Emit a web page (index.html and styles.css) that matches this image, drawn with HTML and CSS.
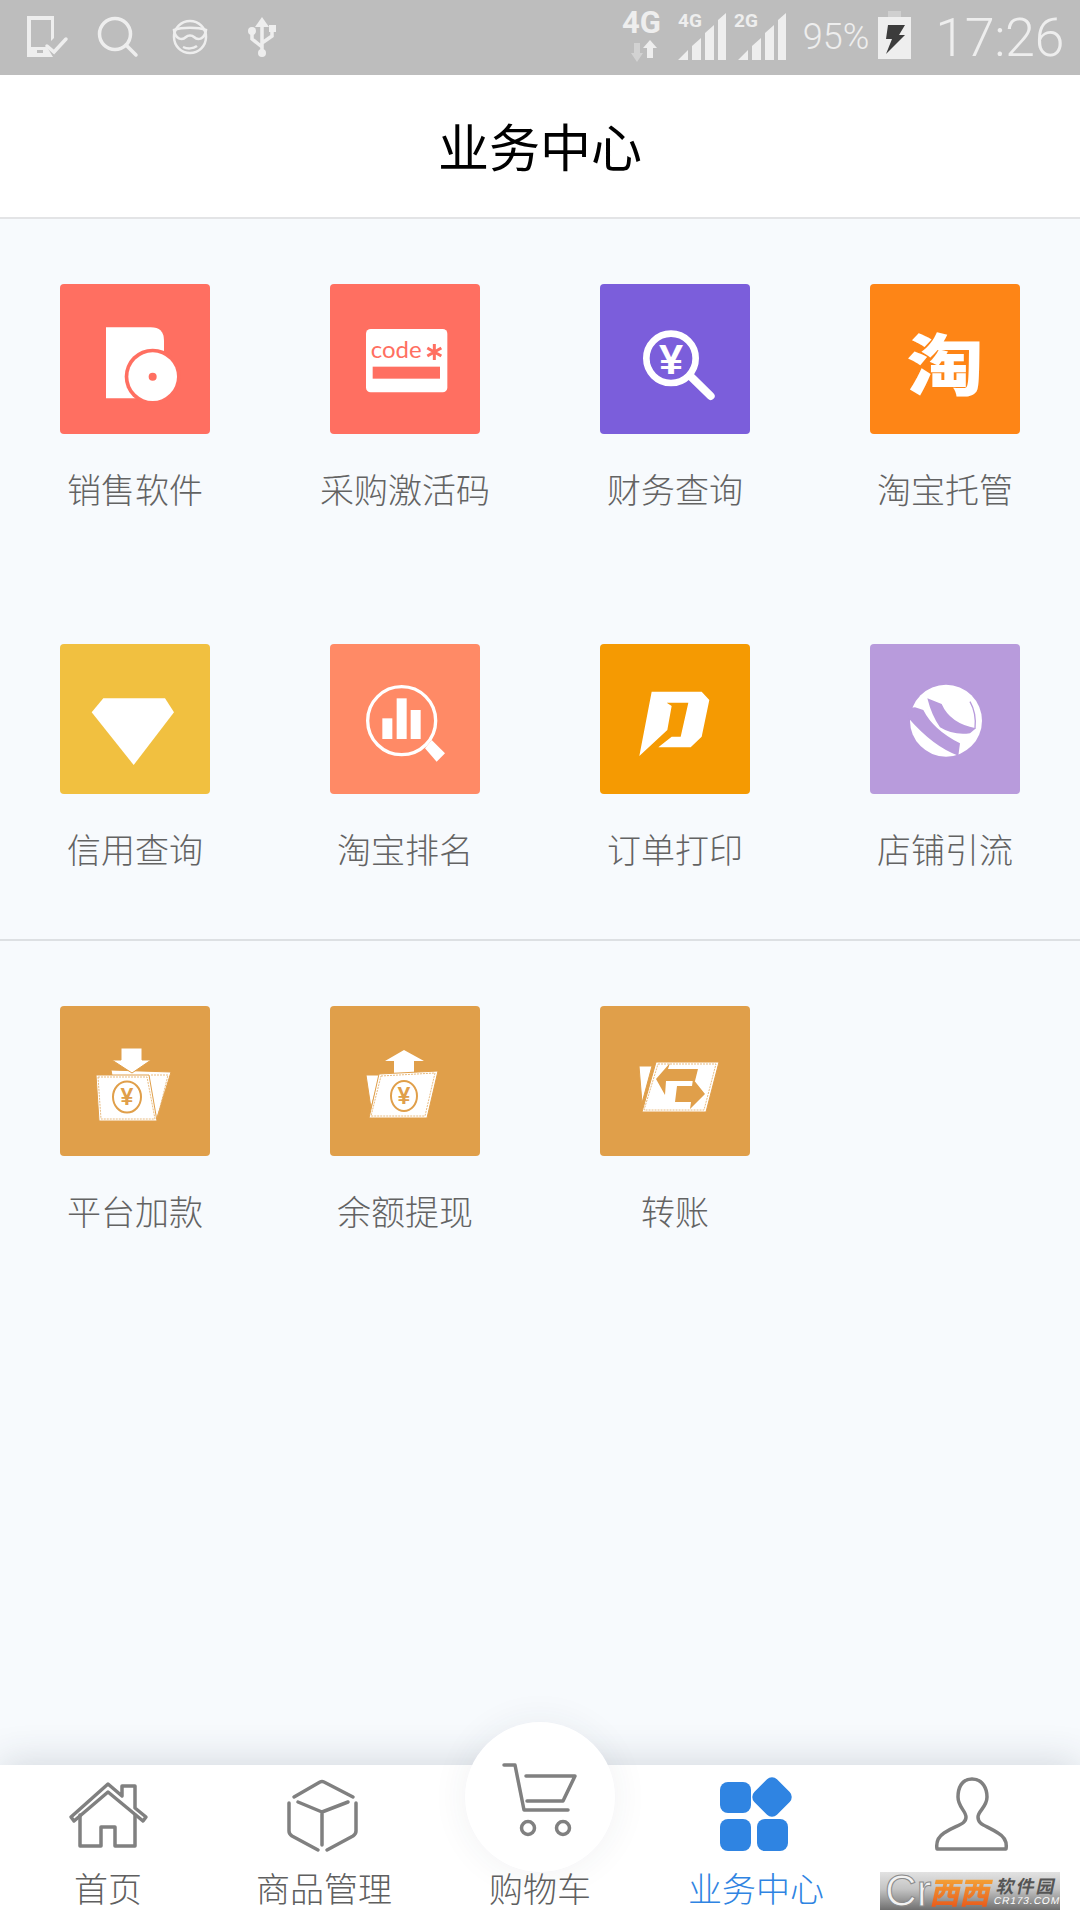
FILE: index.html
```html
<!doctype html>
<html lang="zh-CN">
    <head>
        <meta charset="UTF-8" />
        <meta name="viewport" content="width=device-width, initial-scale=1.0" />
        <title>业务中心</title>
        <link rel="stylesheet" href="styles.css">
    </head>
    <body>
        <div class="statusbar">
            <div class="status-left">
                <svg class="slot" viewBox="11 0 72 75">
                    <path class="st-fill" fill-rule="evenodd" d="M27 16H54V38L51 41V20H31V47H47L53 57H27Z" />
                    <rect x="37" y="50" width="6" height="3" fill="#bdbdbd" />
                    <path class="st-line" d="M47 46L54 52L66 39" />
                </svg>
                <svg class="slot" viewBox="83 0 72 75">
                    <circle class="st-line" cx="115" cy="34" r="15.5" />
                    <path class="st-line" d="M126 45L136 55" />
                </svg>
                <svg class="slot" viewBox="155 0 72 75">
                    <circle class="st-thin" cx="190" cy="37" r="16" />
                    <path class="st-thin" d="M174 30C182 27 198 27 206 30C205 39 198 41 194 37C192 35 188 35 186 37C182 41 175 39 174 30Z" />
                    <path class="st-thin" d="M183 47C187 49 193 49 197 46" />
                </svg>
                <svg class="slot" viewBox="227 0 72 75">
                    <path class="st-fill" d="M262 17L269 27H255Z" />
                    <path class="st-line" d="M262 25V52M262 47L252 39V32M262 43L272 36V30" />
                    <circle class="st-fill" cx="262" cy="53" r="4" />
                    <circle class="st-fill" cx="252" cy="31" r="4" />
                    <rect class="st-fill" x="269" y="25" width="7" height="7" />
                </svg>
            </div>
            <div class="status-right">
                <svg class="net" viewBox="618 0 50 75">
                    <text class="st-net" x="622" y="33">4G</text>
                    <path fill="#d2d2d2" d="M634 43H640V53H643L637 62L631 53H634Z" />
                    <path class="st-fill" d="M650 40L657 48H653V58H647V48H643Z" />
                </svg>
                <svg class="signal" viewBox="674 0 56 75">
                    <text class="st-small" x="678" y="27">4G</text>
                    <path class="st-fill" d="M678 60L688 50V60ZM692 46L701 38V60H692ZM705 33L714 25V60H705ZM718 20L726 13V60H718Z" />
                </svg>
                <svg class="signal" viewBox="730 0 56 75">
                    <text class="st-small" x="734" y="27">2G</text>
                    <path class="st-fill" d="M738 60L748 50V60ZM752 46L761 38V60H752ZM765 33L774 25V60H765ZM778 20L786 13V60H778Z" />
                </svg>
                <span class="percent">95%</span>
                <svg class="battery" viewBox="878 0 36 75">
                    <rect x="889" y="11" width="13" height="7" fill="#cfcfcf" />
                    <rect class="st-fill" x="879" y="17" width="33" height="42" />
                    <path fill="#3c3c3c" d="M889 25H906L900 35H906L887 54L893 39H887Z" />
                </svg>
                <span class="clock">17:26</span>
            </div>
        </div>

        <div class="header">业务中心</div>

        <div class="content">
            <div class="grid grid-main">
                <div class="item">
                    <svg class="tile t-coral" viewBox="0 0 450 450">
                        <path fill="#fff" d="M138 130H272Q312 130 312 170V343H138Z" />
                        <circle cx="278" cy="278" r="84" fill="#ff6f61" />
                        <circle cx="278" cy="278" r="73" fill="#fff" />
                        <circle cx="278" cy="278" r="12" fill="#ff6f61" />
                    </svg>
                    <div class="label">销售软件</div>
                </div>
                <div class="item">
                    <svg class="tile t-coral" viewBox="0 0 450 450">
                        <rect x="108" y="135" width="244" height="190" rx="14" fill="#fff" />
                        <text class="code-text" x="122" y="223">code</text>
                        <path class="code-star" d="M313 180V228M292 192L334 216M334 192L292 216" />
                        <rect x="128" y="248" width="202" height="36" fill="#ff6f61" />
                    </svg>
                    <div class="label">采购激活码</div>
                </div>
                <div class="item">
                    <svg class="tile t-violet" viewBox="0 0 450 450">
                        <circle cx="213" cy="223" r="74" fill="none" stroke="#fff" stroke-width="20" />
                        <path d="M275 280L332 336" stroke="#fff" stroke-width="24" stroke-linecap="round" />
                        <text class="yuan-text" x="213" y="271">¥</text>
                    </svg>
                    <div class="label">财务查询</div>
                </div>
                <div class="item">
                    <svg class="tile t-orange" viewBox="0 0 450 450">
                        <text class="tao-text" transform="translate(225 318) scale(1.15 1)">淘</text>
                    </svg>
                    <div class="label">淘宝托管</div>
                </div>
                <div class="item">
                    <svg class="tile t-yellow" viewBox="0 0 450 450">
                        <path fill="#fff" d="M130 163H315L342 205L221 363L95 205Z" />
                    </svg>
                    <div class="label">信用查询</div>
                </div>
                <div class="item">
                    <svg class="tile t-salmon" viewBox="0 0 450 450">
                        <circle cx="215" cy="230" r="102" fill="none" stroke="#fff" stroke-width="10" />
                        <path fill="#fff" d="M285 313L305 288L345 328L320 353Z" />
                        <rect x="157" y="223" width="30" height="62" fill="#fff" />
                        <rect x="200" y="163" width="30" height="122" fill="#fff" />
                        <rect x="242" y="198" width="30" height="87" fill="#fff" />
                    </svg>
                    <div class="label">淘宝排名</div>
                </div>
                <div class="item">
                    <svg class="tile t-amber" viewBox="0 0 450 450">
                        <path fill="#fff" d="M155 143H305L328 168L305 278L272 310H175L215 278H242L265 176H200L215 186L202 258L118 336Z" />
                    </svg>
                    <div class="label">订单打印</div>
                </div>
                <div class="item">
                    <svg class="tile t-lilac" viewBox="0 0 450 450">
                        <circle cx="228" cy="230" r="108" fill="#fff" />
                        <path fill="#b89bdc" d="M112 193L135 190L160 198Q190 258 270 298L265 335Q190 308 115 222Z" />
                        <path fill="#b89bdc" d="M172 163L215 180Q240 238 318 253L300 268Q250 275 210 250Q185 215 172 163Z" />
                        <path d="M300 173Q320 208 315 253" fill="none" stroke="#b89bdc" stroke-width="4" />
                    </svg>
                    <div class="label">店铺引流</div>
                </div>
            </div>

            <div class="grid">
                <div class="item">
                    <svg class="tile t-tan" viewBox="0 0 150 150">
                        <path class="card" d="M51 64L111 66L96 115H60Z" />
                        <path class="card" d="M36 69H89L97 115H39Z" />
                        <path class="stitch" d="M38 71H87L95 113H41Z" />
                        <path class="stitch" d="M91 69L108 69L98 110" />
                        <path fill="#fff" stroke="#e09f4a" stroke-width="1" d="M61 42H82V54H91L72 67L52 54H61Z" />
                        <ellipse class="coin" cx="67" cy="91" rx="14" ry="15.5" />
                        <text class="coin-text" x="67" y="99">¥</text>
                    </svg>
                    <div class="label">平台加款</div>
                </div>
                <div class="item">
                    <svg class="tile t-tan" viewBox="0 0 150 150">
                        <path fill="#fff" d="M74 44L94 55H84V68H64V55H55Z" />
                        <path class="card" d="M36 69H50L41 102Z" />
                        <path class="card" d="M49 68L108 65L97 112H39Z" />
                        <path class="stitch" d="M51 70L105 67L95 110H41Z" />
                        <ellipse class="coin" cx="74" cy="90" rx="13" ry="15" />
                        <text class="coin-text" x="74" y="98">¥</text>
                    </svg>
                    <div class="label">余额提现</div>
                </div>
                <div class="item">
                    <svg class="tile t-tan" viewBox="0 0 150 150">
                        <path class="card" d="M39 60H52L42 97Z" />
                        <path class="card" d="M56 56H119L106 106H42Z" />
                        <path class="stitch" d="M58 58H116L104 104H44Z" />
                        <path fill="#e09f4a" d="M56 73L70 57L68 63H98L95 75H66L65 89Z" />
                        <path fill="#e09f4a" d="M105 88L93 73L92 80H77L75 96H91L90 103Z" />
                    </svg>
                    <div class="label">转账</div>
                </div>
            </div>
        </div>

        <div class="tabbar">
            <div class="cart-bump"></div>
            <div class="tab">
                <svg class="tab-icon" viewBox="0 0 100 100">
                    <path class="tab-line" d="M13 52L50 19L64 31V21H77V43L88 52L85 56L50 27L16 56Z" />
                    <path class="tab-line" d="M22 50V81H43V62H57V81H77V50" />
                </svg>
                <div class="tab-label">首页</div>
            </div>
            <div class="tab">
                <svg class="tab-icon" viewBox="0 0 100 100">
                    <path class="tab-line" d="M20 32L46 17Q48 16 50 17L79 32" />
                    <path class="tab-line" d="M24 37L48 47L74 37M48 47V80" />
                    <path class="tab-line" d="M15 38V66Q15 69 18 71L44 85" />
                    <path class="tab-line" d="M82 38V66Q82 69 79 71L53 85" />
                </svg>
                <div class="tab-label">商品管理</div>
            </div>
            <div class="tab">
                <svg class="tab-icon" viewBox="0 0 100 100">
                    <path class="tab-line" d="M14 0H25L34 45H78" />
                    <path class="tab-line" d="M36 11H85L73 36H37" />
                    <circle class="tab-line" cx="38" cy="63" r="6.5" />
                    <circle class="tab-line" cx="73" cy="63" r="6.5" />
                </svg>
                <div class="tab-label">购物车</div>
            </div>
            <div class="tab tab-active">
                <svg class="tab-icon" viewBox="0 0 100 100">
                    <rect x="14" y="17" width="31" height="31" rx="8" fill="#2f84e2" />
                    <rect x="14" y="54" width="31" height="32" rx="8" fill="#2f84e2" />
                    <rect x="51" y="54" width="31" height="32" rx="8" fill="#2f84e2" />
                    <rect x="50" y="16" width="32" height="32" rx="7" fill="#2f84e2" transform="rotate(45 66 32)" />
                </svg>
                <div class="tab-label">业务中心</div>
            </div>
            <div class="tab">
                <svg class="tab-icon" viewBox="0 0 100 100">
                    <path class="tab-line" d="M50 14C39 14 36 24 36 32C36 42 44 46 44 52C44 60 34 60 22 68C16 72 14 78 15 84H84C85 78 83 72 76 68C64 60 56 60 56 52C56 46 65 42 65 32C65 24 61 14 50 14Z" />
                </svg>
                <div class="tab-label">我</div>
            </div>
            <div class="watermark">
                <span class="wm-cr">Cr</span>
                <span class="wm-xixi">西西</span>
                <span class="wm-side">
                    <span class="wm-soft">软件园</span>
                    <span class="wm-url">CR173.COM</span>
                </span>
            </div>
        </div>
    </body>
</html>
```

FILE: styles.css
```css
* {
    box-sizing: border-box;
}
body {
    margin: 0;
    width: 1080px;
    height: 1920px;
    display: flex;
    flex-direction: column;
    overflow: hidden;
    background-color: #f7fafd;
    font-family: "Noto Sans CJK SC", "Liberation Sans", sans-serif;
}

/* status bar */
.statusbar {
    height: 75px;
    flex: none;
    display: flex;
    justify-content: space-between;
    background-color: #bdbdbd;
}
.status-left {
    display: flex;
    padding-left: 11px;
}
.status-right {
    display: flex;
    align-items: flex-start;
    padding-right: 16px;
}
.slot {
    width: 72px;
    height: 75px;
}
.st-fill {
    fill: #eeeeee;
}
.st-line {
    fill: none;
    stroke: #eeeeee;
    stroke-width: 3.5;
    stroke-linecap: round;
}
.st-thin {
    fill: none;
    stroke: #eeeeee;
    stroke-width: 2.5;
}
.st-net {
    font-family: Roboto, sans-serif;
    font-size: 31px;
    font-weight: 700;
    fill: #eeeeee;
}
.st-small {
    font-family: Roboto, sans-serif;
    font-size: 19px;
    font-weight: 700;
    fill: #eeeeee;
}
.net {
    width: 50px;
    height: 75px;
    margin-right: 6px;
}
.signal {
    width: 56px;
    height: 75px;
}
.percent {
    font-family: Roboto, sans-serif;
    font-size: 36px;
    font-weight: 300;
    line-height: 75px;
    color: #eeeeee;
    margin-left: 17px;
    margin-right: 8px;
}
.battery {
    width: 36px;
    height: 75px;
}
.clock {
    font-family: Roboto, sans-serif;
    font-size: 54px;
    font-weight: 300;
    letter-spacing: -0.5px;
    line-height: 75px;
    color: #eeeeee;
    margin-left: 22px;
}

/* title */
.header {
    height: 144px;
    flex: none;
    display: flex;
    align-items: center;
    justify-content: center;
    padding-bottom: 2px;
    background-color: #fff;
    border-bottom: 2px solid #e3e4e6;
    font-size: 51px;
    color: #000;
}

/* tiles */
.content {
    flex: 1;
}
.grid {
    display: grid;
    grid-template-columns: repeat(4, 270px);
    grid-auto-rows: 360px;
}
.grid-main {
    border-bottom: 2px solid #dde0e3;
}
.item {
    display: flex;
    flex-direction: column;
    align-items: center;
    padding-top: 65px;
}
.tile {
    width: 150px;
    height: 150px;
    border-radius: 4px;
}
.t-coral { background-color: #ff6f61; }
.t-violet { background-color: #7b5edb; }
.t-orange { background-color: #fe8516; }
.t-yellow { background-color: #f1c040; }
.t-salmon { background-color: #ff8a66; }
.t-amber { background-color: #f59a02; }
.t-lilac { background-color: #b89bdc; }
.t-tan { background-color: #e09f4a; }
.label {
    margin-top: 35px;
    font-size: 34px;
    font-weight: 300;
    line-height: 40px;
    color: #636363;
}
.code-text {
    font-family: Lato, sans-serif;
    font-size: 72px;
    fill: #ff6f61;
}
.code-star {
    fill: none;
    stroke: #ff6f61;
    stroke-width: 9;
}
.yuan-text {
    font-family: "Liberation Sans", sans-serif;
    font-size: 130px;
    font-weight: 700;
    text-anchor: middle;
    fill: #fff;
}
.tao-text {
    font-family: "Noto Sans CJK SC", sans-serif;
    font-size: 200px;
    font-weight: 900;
    text-anchor: middle;
    fill: #fff;
}
.card {
    fill: #fff;
    stroke: #e09f4a;
    stroke-width: 1;
    stroke-linejoin: round;
}
.stitch {
    fill: none;
    stroke: #e2a960;
    stroke-width: 0.8;
    stroke-dasharray: 2 1;
}
.coin {
    fill: none;
    stroke: #e09f4a;
    stroke-width: 2;
}
.coin-text {
    font-family: "Liberation Sans", sans-serif;
    font-size: 23px;
    font-weight: 700;
    text-anchor: middle;
    fill: #e09f4a;
}

/* bottom tabs */
.tabbar {
    height: 155px;
    flex: none;
    position: relative;
    display: flex;
    background-color: #fff;
    box-shadow: 0 -4px 36px rgba(40, 50, 70, 0.16);
}
.cart-bump {
    position: absolute;
    left: 465px;
    top: -43px;
    width: 150px;
    height: 150px;
    border-radius: 50%;
    background-color: #fff;
    box-shadow: 0 0 36px rgba(40, 50, 70, 0.07);
}
.tab {
    width: 216px;
    position: relative;
    display: flex;
    flex-direction: column;
    align-items: center;
}
.tab-icon {
    width: 100px;
    height: 100px;
    overflow: visible;
}
.tab-line {
    fill: none;
    stroke: #808080;
    stroke-width: 3.5;
    stroke-linecap: round;
    stroke-linejoin: round;
}
.tab-label {
    margin-top: 6px;
    font-size: 34px;
    font-weight: 300;
    line-height: 34px;
    color: #5f5f5f;
}
.tab-active .tab-label {
    color: #2f84e2;
}

/* site stamp over the last tab */
.watermark {
    position: absolute;
    left: 880px;
    top: 107px;
    width: 180px;
    height: 38px;
    display: flex;
    align-items: center;
    background: linear-gradient(#e2e2e2, #c4c4c4 45%, #6f6f6f);
}
.wm-cr {
    font-family: "Liberation Sans", sans-serif;
    font-size: 44px;
    line-height: 38px;
    color: #f2f2f2;
    width: 52px;
    flex: none;
    padding-left: 5px;
    -webkit-text-stroke: 1px #8a8a8a;
}
.wm-xixi {
    font-size: 30px;
    font-weight: 900;
    line-height: 36px;
    white-space: nowrap;
    flex: none;
    background: linear-gradient(#f6b13c, #e8561a);
    -webkit-background-clip: text;
    background-clip: text;
    color: transparent;
    transform: skewX(-12deg);
}
.wm-side {
    display: flex;
    flex-direction: column;
    margin-left: 4px;
    color: #fff;
    white-space: nowrap;
    transform: skewX(-12deg);
}
.wm-soft {
    font-size: 18px;
    font-weight: 700;
    line-height: 20px;
    letter-spacing: 2px;
    color: #555;
}
.wm-url {
    font-family: "Liberation Sans", sans-serif;
    font-size: 10px;
    line-height: 12px;
    letter-spacing: 1px;
}
```
